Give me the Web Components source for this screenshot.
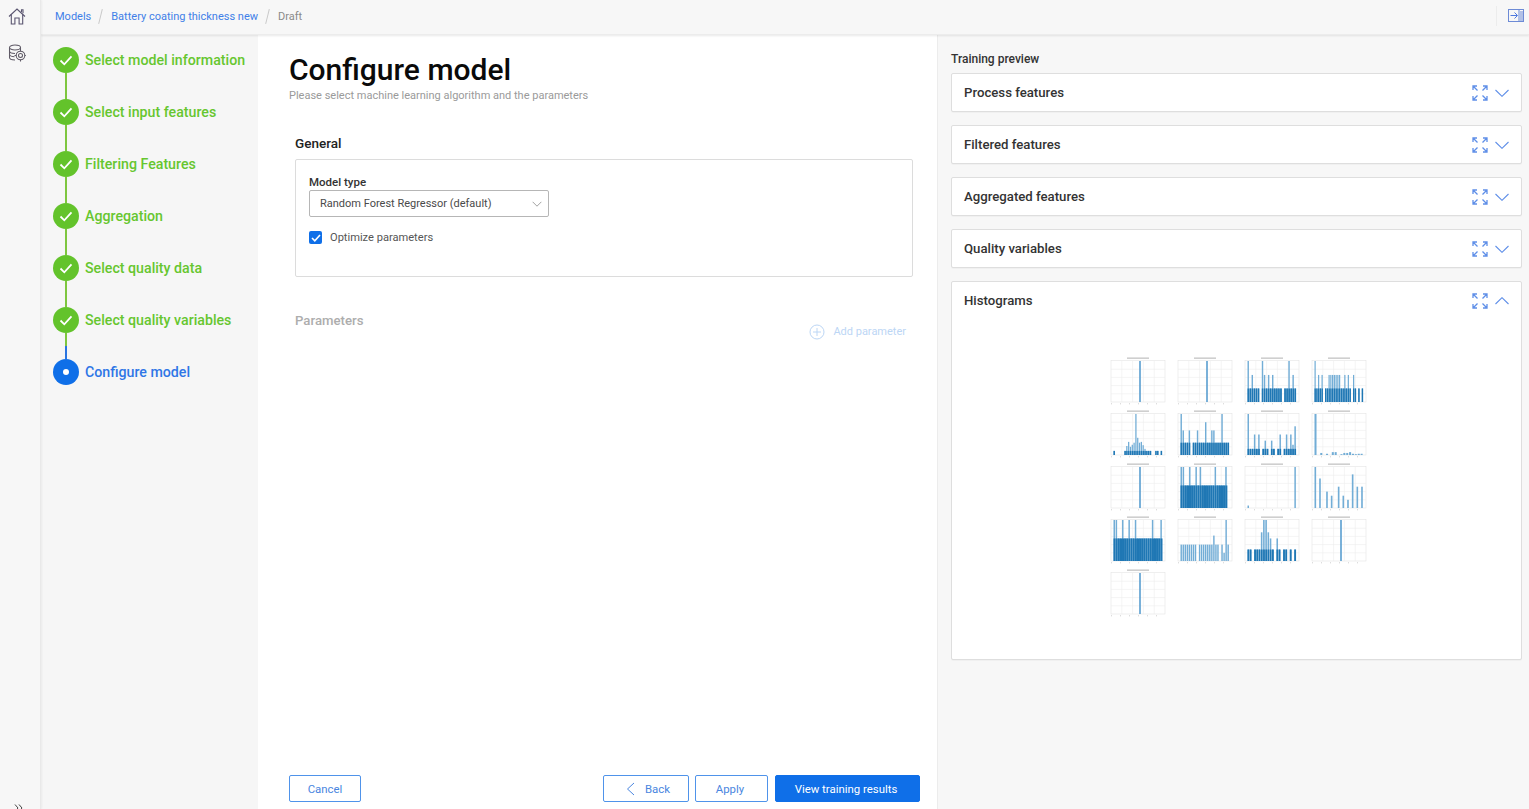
<!DOCTYPE html>
<html lang="en"><head><meta charset="utf-8"><title>Configure model</title>
<style>
html,body{margin:0;height:100%;overflow:hidden;background:#f7f7f7;font-family:Roboto,"Liberation Sans",sans-serif;color:#1a1a1a}
</style></head><body>
<app-shell>
  <side-rail slot="rail"></side-rail>
  <top-bar slot="top"></top-bar>
  <step-list slot="steps">
    <step-item state="done" label="Select model information"></step-item>
    <step-item state="done" label="Select input features"></step-item>
    <step-item state="done" label="Filtering Features"></step-item>
    <step-item state="done" label="Aggregation"></step-item>
    <step-item state="done" label="Select quality data"></step-item>
    <step-item state="pre" label="Select quality variables"></step-item>
    <step-item state="active" label="Configure model"></step-item>
  </step-list>
  <config-form slot="main"></config-form>
  <preview-panel slot="preview">
    <preview-card title="Process features"></preview-card>
    <preview-card title="Filtered features"></preview-card>
    <preview-card title="Aggregated features"></preview-card>
    <preview-card title="Quality variables"></preview-card>
    <preview-card title="Histograms" open>
      <hist-grid></hist-grid>
    </preview-card>
  </preview-panel>
</app-shell>
<script>
const def=(name,html,setup)=>customElements.define(name,class extends HTMLElement{
  constructor(){super();this.attachShadow({mode:'open'})}
  connectedCallback(){this.shadowRoot.innerHTML=typeof html==='function'?html(this):html;if(setup)setup(this)}
});
const BLUE='#0f6fe8';
const chevDown=(c='#5f8fe8',w=16,h=9)=>`<svg width="${w}" height="${h}" viewBox="0 0 16 9" fill="none" stroke="${c}" stroke-width="1.1"><path d="M1 1l7 7 7-7"/></svg>`;

def('app-shell',`<style>
:host{display:grid;grid-template-columns:41px 217px 680px 1fr;grid-template-rows:35px 1fr;width:1529px;height:809px;overflow:hidden}
::slotted([slot=rail]){grid-row:1/3;grid-column:1}
::slotted([slot=top]){grid-row:1;grid-column:2/5}
::slotted([slot=steps]){grid-row:2;grid-column:2}
::slotted([slot=main]){grid-row:2;grid-column:3}
::slotted([slot=preview]){grid-row:2;grid-column:4}
</style><slot name="rail"></slot><slot name="top"></slot><slot name="steps"></slot><slot name="main"></slot><slot name="preview"></slot>`);

def('side-rail',`<style>
:host{display:flex;flex-direction:column;align-items:center;box-sizing:border-box;background:#f7f7f7;border-right:1px solid #e9e9e9;box-shadow:1px 0 2px rgba(0,0,0,.05);padding:8px 6px 0 0;height:809px;position:relative;z-index:2}
svg{display:block}.g{margin-top:19px}
</style>
<svg width="18" height="17" viewBox="0 0 18 17" fill="none" stroke="#5a5570" stroke-width="1.1"><path d="M1 8.500L9 1l8 7.500"/><path d="M3.300 6.500V16h3.600v-6h4.200v6h3.600V6.500"/><path d="M13.500 4V1.800h1.500v3.500"/></svg>
<svg class="g" width="18" height="18" viewBox="0 0 18 18" fill="none" stroke="#5f5a66" stroke-width="1.050"><ellipse cx="7" cy="3.500" rx="5.500" ry="2.500"/><path d="M1.500 3.500v10c0 1.400 2.500 2.500 5.500 2.500M1.500 7c0 1.400 2.500 2.500 5.500 2.500M1.500 10.300c0 1.400 2.500 2.500 5 2.500M12.500 3.500V6"/><circle cx="12.500" cy="11.500" r="2"/><circle cx="12.500" cy="11.500" r="4.300"/><path d="M12.500 5.500v1.700M12.500 15.800v1.700M6.500 11.500h1.700M16.800 11.500h1"/></svg>
<svg style="margin-top:auto;margin-bottom:-3px;margin-left:2px" width="9" height="8" viewBox="0 0 9 8" fill="none" stroke="#444" stroke-width="1"><path d="M1 .5L4 4 1 7.500M5 .5L8 4 5 7.500"/></svg>`);

def('top-bar',`<style>
:host{display:flex;align-items:center;box-sizing:border-box;height:35px;background:#f7f7f7;padding:0 5px 1px 14px;font-size:11px;box-shadow:0 1px 2px rgba(0,0,0,.09);position:relative;z-index:1;border-bottom:1px solid #ececec}
a{color:#3f7fe8;text-decoration:none}
i{display:block;width:1px;height:15px;background:#c9c9c9;transform:rotate(14deg);margin:0 10px 0 9px}
span{color:#8a8a8a}
.end{margin-left:auto;display:flex;align-items:center;margin-bottom:2px}
.d{width:1px;height:20px;background:#ececec;margin-right:11px}
svg{display:block}
</style><a>Models</a><i></i><a>Battery coating thickness new</a><i></i><span>Draft</span>
<div class="end"><div class="d"></div>
<svg width="16" height="13" viewBox="0 0 16 13" fill="none" stroke="#6d8bd6" stroke-width="1"><rect x=".5" y=".5" width="15" height="12"/><path d="M11 .5v12M12 3h3M12 5h3M12 7h3M12 9h3M12 11h3"/><path d="M2.500 6.500H9M6.500 3.500l3 3-3 3" stroke="#4d78de"/></svg></div>`);

def('step-list',`<style>
:host{display:flex;flex-direction:column;box-sizing:border-box;padding:12px 0 0 12px;background:#f6f6f6;min-width:0}
</style><slot></slot>`);

def('step-item',h=>{
 const s=h.getAttribute('state');const active=s==='active';
 const col=active?BLUE:'#63c32b';
 const line=s==='pre'?'linear-gradient(#7ec63f 50%,#2a74e0 50%)':'#7ec63f';
 return `<style>
 :host{display:flex;height:52px;gap:6px}
 .ind{display:flex;flex-direction:column;align-items:center;width:26px;flex:none}
 .c{width:26px;height:26px;border-radius:50%;background:${col};display:flex;align-items:center;justify-content:center;flex:none}
 .l{width:2px;flex:1;background:${line}}
 .t{font-size:14.200px;font-weight:500;line-height:27px;color:${active?'#2f76e6':'#66c62f'};white-space:nowrap}
 .dot{width:6px;height:6px;border-radius:50%;background:#fff}
 </style><div class="ind"><div class="c">${active?'<div class="dot"></div>':'<svg width="14" height="11" viewBox="0 0 14 11" fill="none" stroke="#fff" stroke-width="1.800"><path d="M1.500 5.500l3.800 3.800 7.200-8"/></svg>'}</div>${active?'':'<div class="l"></div>'}</div><div class="t">${h.getAttribute('label')}</div>`;
});

def('config-form',`<style>
:host{display:flex;flex-direction:column;box-sizing:border-box;background:#fff;padding:0 17px 7px 31px;height:774px;border-right:1px solid #ececec}
h1{margin:17px 0 0;font-size:30px;line-height:36px;font-weight:500;color:#0a0a0a}
.sub{font-size:11px;line-height:16px;color:#9a9a9a;margin-top:0}
.sec{margin:30px 7px 0 6px}
h2{margin:0;font-size:13.500px;line-height:18px;font-weight:500;color:#222}
.box{box-sizing:border-box;height:118px;margin-top:7px;border:1px solid #dcdcdc;border-radius:2px;padding:14px 13px}
label{display:block;font-size:11.500px;line-height:16px;font-weight:500;color:#333}
.sel{box-sizing:border-box;display:flex;align-items:center;justify-content:space-between;width:240px;height:27px;margin-top:0;border:1px solid #b6b6b6;border-radius:2px;padding:0 6px 0 10px;font-size:11px;color:#4a4a4a}
.chk{display:flex;align-items:center;gap:8px;margin-top:14px;font-size:11.100px;color:#555}
.cb{width:13px;height:13px;background:${BLUE};border-radius:2px;display:flex;align-items:center;justify-content:center}
.par{display:flex;justify-content:space-between;margin:35px 14px 0 6px;color:#aaa}
.par h2{color:#adadad;font-size:13.200px}
.add{display:flex;align-items:center;gap:8px;margin-top:11px;font-size:11px;color:#bcd6f5;line-height:18px}
.foot{margin-top:auto;display:flex;gap:7px}
.sp{flex:1}
.btn{box-sizing:border-box;height:27px;display:flex;align-items:center;justify-content:center;border:1px solid #4f93ea;border-radius:2px;font-size:11.400px;color:#4a86e0;background:#fff}
.pri{background:${BLUE};border-color:${BLUE};color:#fff;width:145px}
</style>
<h1>Configure model</h1>
<div class="sub">Please select machine learning algorithm and the parameters</div>
<div class="sec"><h2>General</h2>
<div class="box"><label>Model type</label>
<div class="sel"><span>Random Forest Regressor (default)</span>${chevDown('#777',10,6)}</div>
<div class="chk"><div class="cb"><svg width="10" height="8" viewBox="0 0 10 8" fill="none" stroke="#fff" stroke-width="1.600"><path d="M1 4l2.800 2.800L9 1"/></svg></div>Optimize parameters</div>
</div></div>
<div class="par"><h2>Parameters</h2>
<div class="add"><svg width="16" height="16" viewBox="0 0 16 16" fill="none" stroke="#bcd6f5"><circle cx="8" cy="8" r="7"/><path d="M8 4v8M4 8h8"/></svg>Add parameter</div></div>
<div class="foot"><div class="btn" style="width:72px">Cancel</div><div class="sp"></div>
<div class="btn" style="width:86px;gap:10px;padding-left:4px"><svg width="9" height="14" viewBox="0 0 9 14" fill="none" stroke="#4a86e0"><path d="M8 1L1.500 7 8 13"/></svg>Back</div>
<div class="btn" style="width:73px;margin-left:-1px;padding-right:3px">Apply</div>
<div class="btn pri" style="padding-right:3px">View training results</div></div>`);

def('preview-panel',`<style>
:host{display:flex;flex-direction:column;box-sizing:border-box;padding:16px 7px 0 13px;background:#f7f7f7;gap:13px}
.h{font-size:12px;line-height:16px;font-weight:500;color:#333;margin-bottom:-7px}
</style><div class="h">Training preview</div><slot></slot>`);

def('preview-card',h=>{
 const open=h.hasAttribute('open');
 return `<style>
 :host{display:flex;flex-direction:column;box-sizing:border-box;background:#fff;border:1px solid #dedede;border-radius:2px;${open?'height:379px;':'height:39px;'}box-shadow:0 1px 1px rgba(0,0,0,.03)}
 .r{display:flex;align-items:center;height:37px;padding:0 12px 0 12px;flex:none;gap:7px}
 .t{font-size:13.200px;font-weight:500;color:#333;flex:1}
 svg{display:block}
 .chev{transform:${open?'rotate(180deg)':'none'}}
 </style><div class="r"><div class="t">${h.getAttribute('title')}</div>
 <svg width="16" height="16" viewBox="0 0 16 16" fill="none" stroke="#5f8fe8" stroke-width="1.300"><path d="M1 5V1h4M11 1h4v4M15 11v4h-4M5 15H1v-4M1.500 1.500l4 4M14.500 1.500l-4 4M14.500 14.500l-4-4M1.500 14.500l4-4"/></svg>
 <svg class="chev" width="14" height="8" viewBox="0 0 14 8" fill="none" stroke="#5f8fe8" stroke-width="1.100"><path d="M.5 1l6.500 6.300L13.500 1"/></svg>
 </div><slot></slot>`;
});

const HISTS=[
 {b:'c'},{b:'c'},
 {b:[1,.33,.66,.33,.33,.33,0,1,.66,.33,.66,.33,.66,.33,.33,.33,.33,0,.33,.33,1,.33,.66,.33],d:.33},
 {b:[1,.33,.66,.33,.66,0,.33,.33,.66,.66,.66,.66,.66,.66,.66,.33,.33,.66,.33,.66,.33,0,.66,.33,0,.33,0,.33],d:.33},
 {b:[.1,0,0,0,0,0,.1,.22,.32,.2,.25,.3,1,.42,.3,.32,.24,.15,.1,.1,.1,0,0,.1,.1,0,.1],d:.1},
 {b:[1,.6,.3,.3,.6,0,.3,.3,.6,.3,.3,.3,.8,.3,.3,.6,.6,.3,.3,.3,1,.3,.3,.3],d:.3},
 {b:[1,.15,.15,.5,.15,.5,0,.15,.35,.15,0,.35,.15,0,.15,.5,0,.15,.5,.15,.5,.25,.7],d:.15},
 {b:[1,0,.05,0,.03,0,.07,.07,0,.02,.05,.05,.07,.03,.02,.03,.03],d:0},
 {b:'c'},
 {b:[1,1,.55,.55,1,.55,.55,1,.55,1,.55,.55,.55,.55,.55,.55,1,.55,.55,.55,.55,1,0],d:.55,solid:1},
 {b:[.06,0,0,0,0,0,0,0,0,0,0,0,0,0,0,0,0,0,0,0,0,0,1],d:0},
 {b:[1,0,.72,0,0,.4,0,.3,0,0,.52,0,.3,0,.2,0,.82,0,.52,0,.52],d:0},
 {b:[1,1,.55,.55,1,.55,.55,1,.55,.55,1,.55,.55,.55,.55,.55,.55,.55,1,.55,.55,.55,1],d:.55,solid:1},
 {b:[.4,.4,.4,.4,.4,.4,.4,.4,0,.4,.4,.4,.4,.4,.4,.4,.62,.4,.4,0,.4,.2,1,.4],d:0},
 {b:[.28,.28,0,.28,.28,.28,.7,1,1,.7,.55,.28,0,.55,.28,0,.28,.28,0,.28,0,.28],d:.28},
 {b:'c'},{b:'c'}
];
def('hist-plot',h=>{
 const sp=HISTS[+h.getAttribute('n')];
 let bars='';
 const X0=2,W=54,Y1=42,H=41,IN=2.5;
 if(sp.b==='c'){bars=`<rect x="${X0+W/2+1.200}" y="${Y1-H}" width="1.600" height="${H}" fill="#5a9fd0"/>`}
 else{const n=sp.b.length,bw=(W-2*IN)/n;
  sp.b.forEach((v,i)=>{ if(!v)return;const x=X0+IN+i*bw;
   bars+=`<rect x="${x.toFixed(2)}" y="${(Y1-v*H).toFixed(2)}" width="${(bw*.7).toFixed(2)}" height="${(v*H).toFixed(2)}" fill="#72add6"/>`;
   if(sp.d){const dv=Math.min(v,sp.d);bars+=`<rect x="${x.toFixed(2)}" y="${(Y1-dv*H).toFixed(2)}" width="${(bw*(sp.solid?1:.8)).toFixed(2)}" height="${(dv*H).toFixed(2)}" fill="#1f77b4"/>`}
  })}
 let grid='';
 for(let i=1;i<5;i++){const x=X0+W*i/5;grid+=`<path d="M${x} 1V${Y1}" stroke="#ececec" stroke-width=".6"/>`}
 for(let i=1;i<5;i++){const y=Y1-H*i/5;grid+=`<path d="M${X0} ${y}H${X0+W}" stroke="#ececec" stroke-width=".6"/>`}
 return `<style>:host{display:block;width:60px;height:48px}svg{display:block;filter:blur(.4px)}</style>
 <svg width="60" height="48" viewBox="0 0 60 48" style="overflow:visible"><rect x="18" y="-2.500" width="22" height="1.300" fill="#c4c4c4"/>
 <rect x="${X0}" y=".5" width="${W}" height="${Y1-.5}" fill="#fff" stroke="#e4e4e4" stroke-width=".6"/>${grid}${bars}
 <path d="M${X0} ${Y1+1.800}H${X0+W}" stroke="#c9c9c9" stroke-width=".9" stroke-dasharray="1 8"/></svg>`;
});
def('hist-grid',`<style>
:host{display:grid;grid-template-columns:repeat(4,60px);column-gap:7px;row-gap:5px;justify-content:center;padding:41px 0 0 5px}
</style>`+HISTS.map((_,i)=>`<hist-plot n="${i}"></hist-plot>`).join(''));
</script>
</body></html>
